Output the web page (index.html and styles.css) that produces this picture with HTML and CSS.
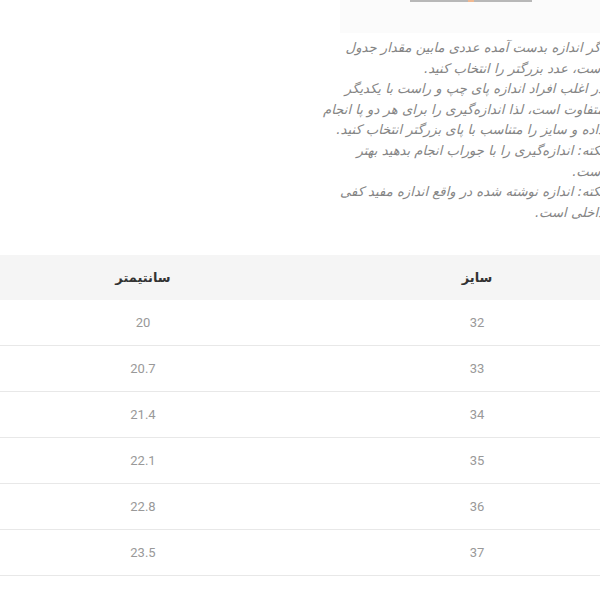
FILE: index.html
```html
<!DOCTYPE html>
<html lang="fa">
<head>
<meta charset="utf-8">
<link rel="stylesheet" href="styles.css">
</head>
<body>
<div class="hero"><div class="hero-line"><span class="hero-dot"></span></div></div>
<div class="guide">
  <div class="line">اگر اندازه بدست آمده عددی مابین مقدار جدول</div>
  <div class="line">است، عدد بزرگتر را انتخاب کنید.</div>
  <div class="line">در اغلب افراد اندازه پای چپ و راست با یکدیگر</div>
  <div class="line">متفاوت است، لذا اندازه‌گیری را برای هر دو پا انجام</div>
  <div class="line">داده و سایز را متناسب با پای بزرگتر انتخاب کنید.</div>
  <div class="line">نکته: اندازه‌گیری را با جوراب انجام بدهید بهتر</div>
  <div class="line">است.</div>
  <div class="line">نکته: اندازه نوشته شده در واقع اندازه مفید کفی</div>
  <div class="line">داخلی است.</div>
</div>
<div class="table">
  <div class="row head"><div class="cell">سایز</div><div class="cell">سانتیمتر</div></div>
  <div class="row"><div class="cell">32</div><div class="cell">20</div></div>
  <div class="row"><div class="cell">33</div><div class="cell">20.7</div></div>
  <div class="row"><div class="cell">34</div><div class="cell">21.4</div></div>
  <div class="row"><div class="cell">35</div><div class="cell">22.1</div></div>
  <div class="row"><div class="cell">36</div><div class="cell">22.8</div></div>
  <div class="row"><div class="cell">37</div><div class="cell">23.5</div></div>
</div>
</body>
</html>
```
FILE: styles.css
```css
html, body {
  margin: 0;
  overflow: hidden;
  background: #fff;
}
body {
  font-family: "DejaVu Sans", sans-serif;
  width: 600px;
  height: 600px;
}
.hero {
  margin-left: 340px;
  height: 33px;
  background: #fbfbfb;
}
.hero-line {
  margin-left: 70px;
  width: 122px;
  height: 2px;
  background: #b8b8b8;
  display: flex;
  justify-content: center;
}
.hero-dot {
  width: 6px;
  height: 2px;
  background: #f0b890;
}
.guide {
  direction: rtl;
  margin-top: 5px;
  margin-left: 318px;
  width: 286px;
  font-size: 13.2px;
  line-height: 20.6px;
  color: #858585;
  font-style: italic;
}
.line {
  white-space: nowrap;
  text-align: right;
}
.table {
  direction: rtl;
  margin-top: 32px;
  margin-left: -24px;
  width: 668px;
}
.row {
  display: grid;
  grid-template-columns: 1fr 1fr;
  height: 45px;
  border-bottom: 1px solid #e8e8e8;
  align-items: center;
  text-align: center;
  font-family: Roboto, sans-serif;
  font-size: 13px;
  color: #999;
}
.row.head {
  background: #f5f5f5;
  border-bottom: none;
  font-family: "DejaVu Sans", sans-serif;
  font-weight: bold;
  font-size: 13px;
  color: #333;
}
```
